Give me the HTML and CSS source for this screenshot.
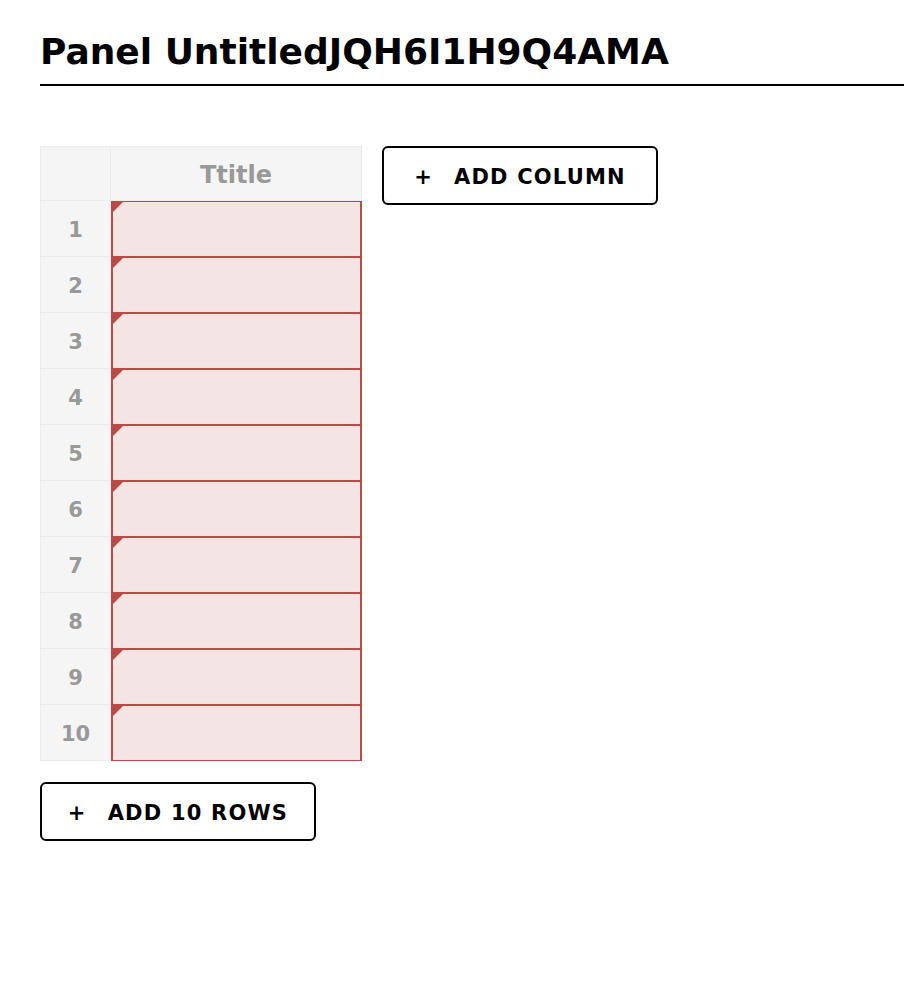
FILE: index.html
```html
<!DOCTYPE html>
<html>
<head>
<meta charset="utf-8">
<link rel="stylesheet" href="styles.css">
</head>
<body>
<div class="page">
  <h1 class="title">Panel UntitledJQH6I1H9Q4AMA</h1>
  <div class="rule"></div>
  <div class="workspace">
    <div class="sheet-col">
      <div class="sheet">
        <div class="corner"></div>
        <div class="colhead">Ttitle</div>
        <div class="rowhead">1</div><div class="cell"></div>
        <div class="rowhead">2</div><div class="cell"></div>
        <div class="rowhead">3</div><div class="cell"></div>
        <div class="rowhead">4</div><div class="cell"></div>
        <div class="rowhead">5</div><div class="cell"></div>
        <div class="rowhead">6</div><div class="cell"></div>
        <div class="rowhead">7</div><div class="cell"></div>
        <div class="rowhead">8</div><div class="cell"></div>
        <div class="rowhead">9</div><div class="cell"></div>
        <div class="rowhead">10</div><div class="cell"></div>
      </div>
      <button class="btn btn-rows"><span class="plus">+</span>ADD 10 ROWS</button>
    </div>
    <button class="btn btn-col"><span class="plus">+</span>ADD COLUMN</button>
  </div>
</div>
</body>
</html>
```
FILE: styles.css
```css
html, body {
  margin: 0;
  padding: 0;
  background: #ffffff;
}
body {
  font-family: "DejaVu Sans", "Liberation Sans", sans-serif;
  color: #000;
}
.page {
  padding: 27px 0 0 40px;
}
.title {
  margin: 0;
  font-size: 36px;
  font-weight: bold;
  line-height: 50px;
  letter-spacing: 0;
}
.rule {
  height: 2px;
  background: #000;
  margin-top: 7px;
}
.workspace {
  display: flex;
  align-items: flex-start;
  gap: 20px;
  margin-top: 60px;
}
.sheet-col {
  display: flex;
  flex-direction: column;
  align-items: flex-start;
  gap: 21px;
}
.sheet {
  display: grid;
  grid-template-columns: 71px 251px;
  grid-template-rows: 55px repeat(10, 56px);
}
.corner, .colhead, .rowhead {
  background: #f5f5f5;
  border: 1px solid #ebebeb;
  box-sizing: border-box;
  color: #999;
  font-weight: bold;
  display: flex;
  align-items: center;
  justify-content: center;
}
.colhead {
  font-size: 24px;
  border-left: none;
  padding-top: 2px;
}
.rowhead {
  font-size: 21px;
  border-top: none;
  padding-top: 2px;
}
.cell {
  position: relative;
  box-sizing: border-box;
  background: #f5e4e4;
  border: 1px solid #b94a45;
  border-left-width: 2px;
  border-right-width: 2px;
}
.cell::before {
  content: "";
  position: absolute;
  left: 0;
  top: 0;
  width: 0;
  height: 0;
  border-top: 10px solid #b94a45;
  border-right: 10px solid transparent;
}
.btn {
  font-family: inherit;
  background: #fff;
  border: 2px solid #000;
  border-radius: 6px;
  box-sizing: border-box;
  height: 59px;
  width: 276px;
  font-size: 21px;
  font-weight: bold;
  color: #000;
  letter-spacing: 1.2px;
  display: flex;
  align-items: center;
  justify-content: center;
  padding: 2px 0 0 0;
}
.plus {
  margin-right: 21px;
}
```
